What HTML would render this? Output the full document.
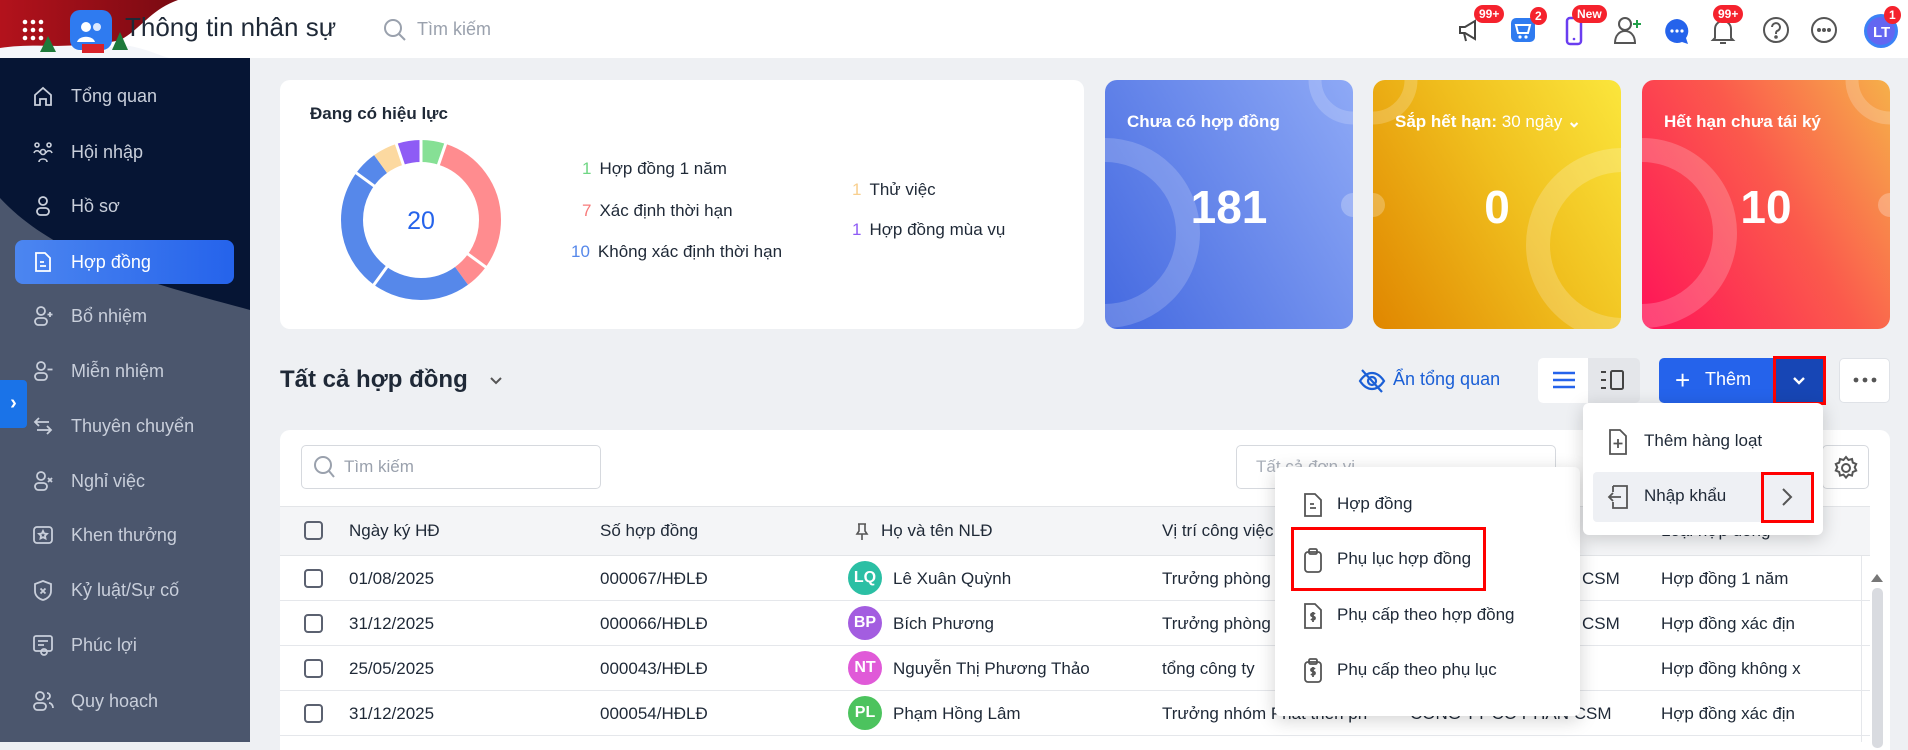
<!DOCTYPE html>
<html><head><meta charset="utf-8">
<style>
*{box-sizing:border-box;margin:0;padding:0}
body{width:1908px;height:742px;overflow:hidden;background:#eef0f3;font-family:"Liberation Sans","Noto Sans CJK SC",sans-serif;color:#1f2937;position:relative}
.abs{position:absolute}
.hdr{left:0;top:0;width:1908px;height:58px;background:#fff}
.side{left:0;top:58px;width:250px;height:684px;background:#4b566d;overflow:hidden}
.mi{position:absolute;left:0;width:250px;height:44px;color:#c9cfdb;font-size:18px;display:flex;align-items:center}
.mi svg{position:absolute;left:32px;top:11px}
.mi span{position:absolute;left:71px}
.card{background:#fff;border-radius:10px}
.leg{position:absolute;font-size:17px;color:#1f2937;white-space:nowrap}
.leg b{font-weight:normal;display:inline-block;margin-right:8px}
.kc{position:absolute;top:80px;width:248px;height:249px;border-radius:12px;overflow:hidden;color:#fff}
.kc .t{position:absolute;left:22px;top:32px;font-size:17px;font-weight:bold}
.kc .n{position:absolute;left:0;width:100%;top:127px;text-align:center;font-size:46px;font-weight:bold;line-height:1;transform:translateY(-50%)}
.th{position:absolute;top:506px;height:50px;font-size:17px;color:#1f2937;line-height:50px}
.row{position:absolute;left:280px;width:1590px;height:45px;border-bottom:1px solid #e5e7eb;font-size:17px}
.row div{position:absolute;top:0;line-height:45px;white-space:nowrap}
.cb{position:absolute;width:19px;height:19px;border:2px solid #5b6170;border-radius:4px}
.av{width:34px;height:34px;border-radius:50%;color:#fff;font-weight:bold;font-size:16px;text-align:center;line-height:34px !important;top:5px !important}
.menu{background:#fff;border-radius:6px;box-shadow:0 4px 18px rgba(0,0,0,.18)}
.mit{position:absolute;font-size:17px;color:#1f2937;white-space:nowrap}
.badge{position:absolute;background:#f5222d;color:#fff;font-size:12px;font-weight:bold;border-radius:10px;padding:1px 5px;line-height:16px}
</style></head><body>

<div class="abs hdr"></div>
<svg class="abs" style="left:0;top:0" width="180" height="62">
<defs><linearGradient id="xr" x1="0" y1="0" x2="1" y2="0"><stop offset="0" stop-color="#b3121c"/><stop offset="1" stop-color="#7a0a12"/></linearGradient></defs>
<path d="M0 0H178C150 10 140 30 120 40 90 48 40 44 0 50Z" fill="url(#xr)"/>
<path d="M0 48C40 42 90 50 130 46 150 50 160 56 170 58H0Z" fill="#f4f6fa"/>
<g fill="#fff"><circle cx="25" cy="22" r="2.3"/><circle cx="33" cy="22" r="2.3"/><circle cx="41" cy="22" r="2.3"/><circle cx="25" cy="30" r="2.3"/><circle cx="33" cy="30" r="2.3"/><circle cx="41" cy="30" r="2.3"/><circle cx="25" cy="38" r="2.3"/><circle cx="33" cy="38" r="2.3"/><circle cx="41" cy="38" r="2.3"/></g>
<path d="M40 52l8-16 8 16z" fill="#1e7a3a"/><path d="M112 50l8-18 8 18z" fill="#1e7a3a"/>
<rect x="70" y="10" width="42" height="40" rx="10" fill="#2f7bf0"/>
<circle cx="86" cy="27" r="5" fill="#fff"/><circle cx="97" cy="27" r="4" fill="#dbe8ff"/><path d="M77 42c2-7 16-7 18 0z" fill="#fff"/>
<rect x="82" y="44" width="22" height="9" fill="#d8232a"/>
</svg>
<div class="abs" style="left:125px;top:12px;font-size:26px;color:#1f2937">Thông tin nhân sự</div>
<svg class="abs" style="left:383px;top:18px" width="24" height="24" fill="none" stroke="#9aa1ad" stroke-width="2"><circle cx="10" cy="10" r="8"/><path d="M16 16l6 6"/></svg>
<div class="abs" style="left:417px;top:19px;font-size:18px;color:#9aa1ad">Tìm kiếm</div>

<svg class="abs" style="left:1456px;top:16px" width="28" height="28" fill="none" stroke="#444" stroke-width="2"><path d="M4 11h5l10-6v18l-10-6H4z"/><path d="M8 17l2 8"/></svg>
<div class="badge" style="left:1474px;top:5px">99+</div>
<svg class="abs" style="left:1510px;top:16px" width="26" height="28"><rect x="1" y="2" width="24" height="24" rx="5" fill="#2f7bf0"/><path d="M6 9h14l-2 8H8z" fill="none" stroke="#fff" stroke-width="2"/><circle cx="10" cy="21" r="1.6" fill="#fff"/><circle cx="16" cy="21" r="1.6" fill="#fff"/></svg>
<div class="badge" style="left:1530px;top:7px;border-radius:50%;padding:1px 5px">2</div>
<svg class="abs" style="left:1564px;top:14px" width="20" height="32"><rect x="3" y="4" width="14" height="26" rx="3" fill="none" stroke="#6a3df0" stroke-width="2.5"/><circle cx="10" cy="25" r="1.3" fill="#6a3df0"/></svg>
<div class="badge" style="left:1572px;top:5px">New</div>
<svg class="abs" style="left:1612px;top:14px" width="32" height="32" fill="none" stroke="#555" stroke-width="2"><circle cx="13" cy="10" r="6"/><path d="M3 29c0-8 5-12 10-12s10 4 10 12z"/><path d="M25 6v8M21 10h8" stroke="#22a04a"/></svg>
<svg class="abs" style="left:1663px;top:17px" width="28" height="28"><path d="M14 2a12 12 0 1 0 5 23l6 2-2-6A12 12 0 0 0 14 2z" fill="#2563eb"/><circle cx="9" cy="14" r="1.6" fill="#fff"/><circle cx="14" cy="14" r="1.6" fill="#fff"/><circle cx="19" cy="14" r="1.6" fill="#fff"/></svg>
<svg class="abs" style="left:1710px;top:16px" width="26" height="30" fill="none" stroke="#555" stroke-width="2"><path d="M5 22V13a8 8 0 0 1 16 0v9l2 2H3z"/><path d="M10 27h6"/></svg>
<div class="badge" style="left:1713px;top:5px">99+</div>
<svg class="abs" style="left:1762px;top:16px" width="28" height="28" fill="none" stroke="#555" stroke-width="2"><circle cx="14" cy="14" r="12"/><path d="M10 11a4 4 0 1 1 5 4c-1 .5-1 1.5-1 3"/><circle cx="14" cy="21" r=".8" fill="#555"/></svg>
<svg class="abs" style="left:1810px;top:16px" width="28" height="28" fill="none" stroke="#555" stroke-width="2"><circle cx="14" cy="14" r="12"/><circle cx="9" cy="14" r="1" fill="#555"/><circle cx="14" cy="14" r="1" fill="#555"/><circle cx="19" cy="14" r="1" fill="#555"/></svg>
<svg class="abs" style="left:1862px;top:10px" width="38" height="40"><circle cx="19" cy="21" r="17" fill="#3b82f6"/><circle cx="19" cy="21" r="14" fill="#6366f1"/><text x="11" y="27" font-size="15" fill="#fff" font-family="Liberation Sans" font-weight="bold">LT</text></svg>
<div class="badge" style="left:1884px;top:6px;border-radius:50%;padding:1px 5px">1</div>

<div class="abs side">
<svg class="abs" style="left:0;top:0" width="250" height="684"><path d="M0 0H250V252C170 230 60 205 0 140Z" fill="#061534"/></svg>
<div class="mi" style="top:16px"><svg width="22" height="22" fill="none" stroke="#c9cfdb" stroke-width="1.8"><path d="M3 10l8-7 8 7v10h-5v-6h-6v6H3z"/></svg><span>Tổng quan</span></div>
<div class="mi" style="top:72px"><svg width="22" height="22" fill="none" stroke="#c9cfdb" stroke-width="1.6"><circle cx="5" cy="4" r="2"/><circle cx="17" cy="4" r="2"/><circle cx="11" cy="11" r="2.5"/><path d="M2 12c1-3 5-3 6 0M14 12c1-3 5-3 6 0M7 21c0-4 8-4 8 0"/></svg><span>Hội nhập</span></div>
<div class="mi" style="top:126px"><svg width="22" height="22" fill="none" stroke="#c9cfdb" stroke-width="1.8"><circle cx="11" cy="6" r="4"/><rect x="5" y="13" width="12" height="7" rx="3.5"/></svg><span>Hồ sơ</span></div>
<div style="position:absolute;left:15px;top:182px;width:219px;height:44px;border-radius:8px;background:linear-gradient(90deg,#4c86f0,#2563eb)"></div>
<div class="mi" style="top:182px;color:#fff"><svg width="22" height="22" fill="none" stroke="#fff" stroke-width="1.8"><path d="M4 2h9l5 5v13H4z"/><path d="M8 11h4M8 15h6"/></svg><span>Hợp đồng</span></div>
<div class="mi" style="top:236px"><svg width="22" height="22" fill="none" stroke="#c9cfdb" stroke-width="1.8"><circle cx="9" cy="6" r="4"/><rect x="3" y="13" width="12" height="7" rx="3.5"/><path d="M18 7v5M15.5 9.5h5"/></svg><span>Bổ nhiệm</span></div>
<div class="mi" style="top:291px"><svg width="22" height="22" fill="none" stroke="#c9cfdb" stroke-width="1.8"><circle cx="9" cy="6" r="4"/><rect x="3" y="13" width="12" height="7" rx="3.5"/><path d="M15.5 9.5h5"/></svg><span>Miễn nhiệm</span></div>
<div class="mi" style="top:346px"><svg width="22" height="22" fill="none" stroke="#c9cfdb" stroke-width="1.8"><path d="M7 3L3 7l4 4M3 7h14M15 11l4 4-4 4M19 15H5"/></svg><span>Thuyên chuyển</span></div>
<div class="mi" style="top:401px"><svg width="22" height="22" fill="none" stroke="#c9cfdb" stroke-width="1.8"><circle cx="9" cy="6" r="4"/><rect x="3" y="13" width="12" height="7" rx="3.5"/><path d="M16 8l4 4M20 8l-4 4"/></svg><span>Nghỉ việc</span></div>
<div class="mi" style="top:455px"><svg width="22" height="22" fill="none" stroke="#c9cfdb" stroke-width="1.8"><rect x="2" y="3" width="18" height="16" rx="3"/><path d="M11 7l1.2 2.5 2.8.3-2 2 .5 2.7-2.5-1.3-2.5 1.3.5-2.7-2-2 2.8-.3z"/></svg><span>Khen thưởng</span></div>
<div class="mi" style="top:510px"><svg width="22" height="22" fill="none" stroke="#c9cfdb" stroke-width="1.8"><path d="M11 2l8 3v7c0 5-4 8-8 9-4-1-8-4-8-9V5z"/><path d="M8.5 9.5l5 5M13.5 9.5l-5 5"/></svg><span>Kỷ luật/Sự cố</span></div>
<div class="mi" style="top:565px"><svg width="22" height="22" fill="none" stroke="#c9cfdb" stroke-width="1.8"><rect x="2" y="2" width="18" height="15" rx="2"/><path d="M6 7h10M6 11h6"/><circle cx="12" cy="18" r="3"/></svg><span>Phúc lợi</span></div>
<div class="mi" style="top:621px"><svg width="22" height="22" fill="none" stroke="#c9cfdb" stroke-width="1.8"><circle cx="8" cy="6" r="4"/><rect x="2" y="13" width="12" height="7" rx="3.5"/><path d="M15 3a3 3 0 0 1 0 6M17 13c2 0 4 2 4 5"/></svg><span>Quy hoạch</span></div>
</div>
<div class="abs" style="left:0;top:380px;width:27px;height:48px;background:#1a73e8;border-radius:0 4px 4px 0;color:#fff;font-size:20px;font-weight:bold;line-height:46px;text-align:center">›</div>

<div class="abs card" style="left:280px;top:80px;width:804px;height:249px"></div>
<div class="abs" style="left:310px;top:104px;font-size:17px;font-weight:bold">Đang có hiệu lực</div>
<svg class="abs" style="left:331px;top:130px" width="180" height="180" viewBox="-90 -90 180 180">
<g fill="none" stroke-width="22" transform="rotate(-90)">
<circle r="69" stroke="#86e095" stroke-dasharray="21.7 411.8" stroke-dashoffset="0"/>
<circle r="69" stroke="#ff8c8f" stroke-dasharray="151.7 281.8" stroke-dashoffset="-21.7"/>
<circle r="69" stroke="#5688ea" stroke-dasharray="216.8 216.7" stroke-dashoffset="-173.4"/>
<circle r="69" stroke="#fcd9a0" stroke-dasharray="21.7 411.8" stroke-dashoffset="-390.2"/>
<circle r="69" stroke="#8e5cf5" stroke-dasharray="21.7 411.8" stroke-dashoffset="-411.9"/>
</g>
<g stroke="#fff" stroke-width="3"><line x1="0" y1="-56" x2="0" y2="-82"/><line x1="16.8" y1="-53.4" x2="25.3" y2="-78"/><line x1="45.4" y1="32.9" x2="66.3" y2="48.2"/><line x1="-32.9" y1="45.3" x2="-48.2" y2="66.3"/><line x1="-45.4" y1="-32.9" x2="-66.3" y2="-48.2"/><line x1="-17" y1="-53.4" x2="-25.3" y2="-78"/></g>
<text x="0" y="9" text-anchor="middle" font-size="25" fill="#2563eb" font-family="Liberation Sans">20</text>
</svg>
<div class="leg" style="left:582px;top:159px"><b style="color:#6fd684">1</b>Hợp đồng 1 năm</div>
<div class="leg" style="left:582px;top:201px"><b style="color:#f77b7b">7</b>Xác định thời hạn</div>
<div class="leg" style="left:571px;top:242px"><b style="color:#5688ea">10</b>Không xác định thời hạn</div>
<div class="leg" style="left:852px;top:180px"><b style="color:#f8cf8e">1</b>Thử việc</div>
<div class="leg" style="left:852px;top:220px"><b style="color:#8e5cf5">1</b>Hợp đồng mùa vụ</div>

<div class="kc" style="left:1105px;background:linear-gradient(60deg,#4469e0,#8ea9f6)">
<svg class="abs" style="left:0;top:0" width="248" height="249" fill="none" stroke="rgba(255,255,255,.18)" stroke-width="24"><circle cx="0" cy="153" r="83"/><circle cx="248" cy="0" r="38" stroke-width="13"/><circle cx="248" cy="125" r="12" fill="rgba(255,255,255,.25)" stroke="none"/></svg>
<div class="t">Chưa có hợp đồng</div><div class="n">181</div></div>
<div class="kc" style="left:1373px;background:linear-gradient(60deg,#e08600,#f0bf1e 55%,#fbe63c)">
<svg class="abs" style="left:0;top:0" width="248" height="249" fill="none" stroke="rgba(255,255,255,.2)" stroke-width="24"><circle cx="250" cy="165" r="85"/><circle cx="0" cy="0" r="38" stroke-width="13"/><circle cx="0" cy="125" r="12" fill="rgba(255,255,255,.25)" stroke="none"/></svg>
<div class="t">Sắp hết hạn: <span style="font-weight:normal">30 ngày</span> ⌄</div><div class="n">0</div></div>
<div class="kc" style="left:1642px;background:linear-gradient(60deg,#ff1358,#fb5a4c 55%,#f6b04a)">
<svg class="abs" style="left:0;top:0" width="248" height="249" fill="none" stroke="rgba(255,255,255,.2)" stroke-width="24"><circle cx="0" cy="153" r="83"/><circle cx="248" cy="0" r="38" stroke-width="13"/><circle cx="248" cy="125" r="12" fill="rgba(255,255,255,.25)" stroke="none"/></svg>
<div class="t">Hết hạn chưa tái ký</div><div class="n">10</div></div>

<div class="abs" style="left:280px;top:366px;font-size:24px;font-weight:bold">Tất cả hợp đồng</div>
<svg class="abs" style="left:489px;top:374px" width="14" height="14" fill="none" stroke="#555" stroke-width="2"><path d="M2 4l5 5 5-5"/></svg>
<svg class="abs" style="left:1358px;top:368px" width="28" height="26" fill="none" stroke="#1a5fd6" stroke-width="2.2"><path d="M2 13c4-6 8-8 12-8s8 2 12 8c-4 6-8 8-12 8s-8-2-12-8z"/><circle cx="14" cy="13" r="4"/><path d="M4 2l20 22"/></svg>
<div class="abs" style="left:1393px;top:369px;font-size:18px;color:#1a5fd6">Ẩn tổng quan</div>
<div class="abs" style="left:1538px;top:358px;width:102px;height:45px;border-radius:5px;background:#e4e6ea;overflow:hidden"><div style="width:50px;height:45px;background:#fff"></div></div>
<svg class="abs" style="left:1552px;top:370px" width="24" height="20" stroke="#2563eb" stroke-width="2.4"><path d="M1 3h22M1 10h22M1 17h22"/></svg>
<svg class="abs" style="left:1600px;top:369px" width="26" height="22" fill="none" stroke="#444" stroke-width="2"><path d="M1 3h5M1 11h5M1 19h5"/><rect x="11" y="2" width="12" height="18" rx="1.5"/></svg>
<div class="abs" style="left:1659px;top:358px;width:166px;height:45px;border-radius:5px 0 0 5px;background:#2563eb"></div>
<div class="abs" style="left:1675px;top:367px;color:#fff;font-size:26px;line-height:26px">+</div>
<div class="abs" style="left:1705px;top:369px;color:#fff;font-size:18px">Thêm</div>
<div class="abs" style="left:1773px;top:356px;width:53px;height:49px;background:#1746b5;border:3px solid #f00"></div>
<svg class="abs" style="left:1791px;top:374px" width="16" height="14" fill="none" stroke="#fff" stroke-width="2.4"><path d="M3 4l5 5 5-5"/></svg>
<div class="abs" style="left:1839px;top:358px;width:51px;height:45px;border-radius:5px;background:#fff;border:1px solid #dfe2e7"></div>
<svg class="abs" style="left:1853px;top:377px" width="24" height="6" fill="#555"><circle cx="3" cy="3" r="2.4"/><circle cx="12" cy="3" r="2.4"/><circle cx="21" cy="3" r="2.4"/></svg>

<div class="abs" style="left:280px;top:430px;width:1610px;height:320px;background:#fff;border-radius:10px 10px 0 0"></div>
<div class="abs" style="left:301px;top:445px;width:300px;height:44px;border:1px solid #d6d9de;border-radius:5px"></div>
<svg class="abs" style="left:313px;top:455px" width="22" height="24" fill="none" stroke="#9aa1ad" stroke-width="2"><circle cx="10" cy="10" r="8"/><path d="M16 16l5 6"/></svg>
<div class="abs" style="left:344px;top:457px;font-size:17px;color:#9aa1ad">Tìm kiếm</div>
<div class="abs" style="left:1236px;top:445px;width:320px;height:44px;border:1px solid #d6d9de;border-radius:5px"></div>
<div class="abs" style="left:1256px;top:457px;font-size:17px;color:#aab0ba">Tất cả đơn vị</div>
<div class="abs" style="left:1822px;top:445px;width:47px;height:44px;border:1px solid #d6d9de;border-radius:5px"></div>
<svg class="abs" style="left:1833px;top:455px" width="26" height="26" fill="none" stroke="#555" stroke-width="2"><circle cx="13" cy="13" r="4"/><path d="M13 2l2.5 3 3.5-1 .8 3.6 3.4 1.4-1.5 3.3 1.5 3.3-3.4 1.4-.8 3.6-3.5-1-2.5 3-2.5-3-3.5 1-.8-3.6-3.4-1.4 1.5-3.3-1.5-3.3 3.4-1.4.8-3.6 3.5 1z"/></svg>

<div class="abs" style="left:280px;top:506px;width:1590px;height:50px;background:#f4f5f7;border-top:1px solid #e3e5e8;border-bottom:1px solid #e3e5e8"></div>
<div class="cb" style="left:304px;top:521px"></div>
<div class="th" style="left:349px">Ngày ký HĐ</div>
<div class="th" style="left:600px">Số hợp đồng</div>
<svg class="abs" style="left:855px;top:523px" width="14" height="18" fill="none" stroke="#555" stroke-width="1.6"><path d="M3 1h8M4 1v7l-2 3h10l-2-3V1M7 11v6"/></svg>
<div class="th" style="left:881px">Họ và tên NLĐ</div>
<div class="th" style="left:1162px">Vị trí công việc</div>
<div class="th" style="left:1661px">Loại hợp đồng</div>

<div class="row" style="top:556px"><div class="cb" style="left:24px;top:13px"></div><div style="left:69px">01/08/2025</div><div style="left:320px">000067/HĐLĐ</div><div class="av" style="left:568px;background:#2bbfa4">LQ</div><div style="left:613px">Lê Xuân Quỳnh</div><div style="left:882px">Trưởng phòng</div><div style="left:1302px">CSM</div><div style="left:1381px">Hợp đồng 1 năm</div></div>
<div class="row" style="top:601px"><div class="cb" style="left:24px;top:13px"></div><div style="left:69px">31/12/2025</div><div style="left:320px">000066/HĐLĐ</div><div class="av" style="left:568px;background:#a35de0">BP</div><div style="left:613px">Bích Phương</div><div style="left:882px">Trưởng phòng</div><div style="left:1302px">CSM</div><div style="left:1381px">Hợp đồng xác địn</div></div>
<div class="row" style="top:646px"><div class="cb" style="left:24px;top:13px"></div><div style="left:69px">25/05/2025</div><div style="left:320px">000043/HĐLĐ</div><div class="av" style="left:568px;background:#e05ad8">NT</div><div style="left:613px">Nguyễn Thị Phương Thảo</div><div style="left:882px">tổng công ty</div><div style="left:1381px">Hợp đồng không x</div></div>
<div class="row" style="top:691px"><div class="cb" style="left:24px;top:13px"></div><div style="left:69px">31/12/2025</div><div style="left:320px">000054/HĐLĐ</div><div class="av" style="left:568px;background:#4cc35e">PL</div><div style="left:613px">Phạm Hồng Lâm</div><div style="left:882px">Trưởng nhóm Phát triển ph</div><div style="left:1130px">CÔNG TY CỔ PHẦN CSM</div><div style="left:1381px">Hợp đồng xác địn</div></div>
<div class="abs" style="left:1861px;top:556px;width:1px;height:186px;background:#e5e7eb"></div>
<svg class="abs" style="left:1870px;top:573px" width="14" height="10"><path d="M1 9l6-8 6 8z" fill="#777"/></svg>
<div class="abs" style="left:1872px;top:588px;width:11px;height:160px;border-radius:5px;background:#d9dbe0"></div>

<div class="abs menu" style="left:1275px;top:467px;width:305px;height:249px"></div>
<svg class="abs" style="left:1302px;top:492px" width="22" height="26" fill="none" stroke="#555" stroke-width="1.8"><path d="M3 2h10l6 6v16H3z"/><path d="M8 12h4M8 16h6"/></svg>
<div class="mit" style="left:1337px;top:494px">Hợp đồng</div>
<svg class="abs" style="left:1302px;top:547px" width="22" height="28" fill="none" stroke="#555" stroke-width="1.8"><rect x="3" y="5" width="16" height="20" rx="3"/><rect x="7" y="2" width="8" height="5" rx="1.5"/></svg>
<div class="mit" style="left:1337px;top:549px">Phụ lục hợp đồng</div>
<div class="abs" style="left:1291px;top:527px;width:195px;height:64px;border:3px solid #f00"></div>
<svg class="abs" style="left:1302px;top:602px" width="22" height="28" fill="none" stroke="#555" stroke-width="1.8"><path d="M3 2h10l6 6v18H3z"/><path d="M13 12c-1-1-4-1-4 1s4 1 4 3-3 2-4 1M11 10v10"/></svg>
<div class="mit" style="left:1337px;top:605px">Phụ cấp theo hợp đồng</div>
<svg class="abs" style="left:1302px;top:657px" width="22" height="28" fill="none" stroke="#555" stroke-width="1.8"><rect x="3" y="5" width="16" height="20" rx="3"/><rect x="7" y="2" width="8" height="5" rx="1.5"/><path d="M13 12c-1-1-4-1-4 1s4 1 4 3-3 2-4 1M11 10v10"/></svg>
<div class="mit" style="left:1337px;top:660px">Phụ cấp theo phụ lục</div>

<div class="abs menu" style="left:1583px;top:403px;width:240px;height:132px"></div>
<svg class="abs" style="left:1607px;top:428px" width="22" height="28" fill="none" stroke="#555" stroke-width="1.8"><path d="M3 2h10l6 6v18H3z"/><path d="M11 11v9M6.5 15.5h9"/></svg>
<div class="mit" style="left:1644px;top:431px">Thêm hàng loạt</div>
<div class="abs" style="left:1593px;top:472px;width:220px;height:50px;background:#eef0f4;border-radius:4px"></div>
<svg class="abs" style="left:1607px;top:484px" width="24" height="26" fill="none" stroke="#555" stroke-width="1.8"><path d="M6 2h14v22H6v-6M6 8V2"/><path d="M14 13H2M6 9l-4 4 4 4"/></svg>
<div class="mit" style="left:1644px;top:486px">Nhập khẩu</div>
<div class="abs" style="left:1761px;top:472px;width:53px;height:51px;border:3px solid #f00"></div>
<svg class="abs" style="left:1781px;top:487px" width="12" height="20" fill="none" stroke="#555" stroke-width="2"><path d="M2 2l8 8-8 8"/></svg>
</body></html>
